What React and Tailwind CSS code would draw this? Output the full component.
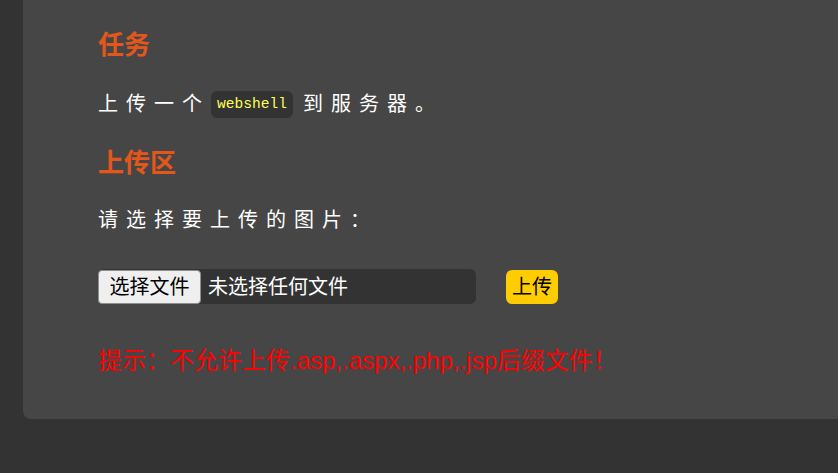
import React from "react";

const App = () => {
  return (
    <main className="min-h-screen w-full bg-[#333333] overflow-hidden font-[family-name:'Liberation_Sans','Noto_Sans_CJK_SC',sans-serif]">
      <div className="ml-[23px] mr-[-20px] bg-[#464646] rounded-bl-lg pl-[75px] pt-[27px] pb-[42px]">
        {/* Task */}
        <h2 className="text-[26px] leading-[36px] font-bold text-[#e4571b]">任务</h2>
        <p className="mt-[27px] text-[20px] leading-[28px] tracking-[8px] text-white flex items-center">
          上传一个
          <code className="ml-[1px] mr-[10px] px-[6px] h-[27px] flex items-center rounded-md bg-[#333333] text-[#ffff55] text-[14.6px] tracking-normal font-normal font-[family-name:'Liberation_Mono',monospace]">
            webshell
          </code>
          到服务器。
        </p>

        {/* Upload */}
        <h2 className="mt-[27px] text-[26px] leading-[36px] font-bold text-[#e4571b]">上传区</h2>
        <p className="mt-[25px] text-[20px] leading-[28px] tracking-[8px] text-white">请选择要上传的图片：</p>

        <form className="mt-[35px] flex items-center h-[35px]">
          <div className="w-[378px] h-[35px] flex items-center bg-[#333333] rounded-md">
            <button
              type="button"
              className="h-[34px] w-[103px] bg-[#efefef] border border-[#8f8f8f] rounded text-[20px] text-black"
            >
              选择文件
            </button>
            <span className="ml-[7px] text-[20px] text-white">未选择任何文件</span>
          </div>
          <button
            type="submit"
            className="ml-[30px] h-[34px] w-[52px] bg-[#ffcc00] rounded-md text-[20px] text-black"
          >
            上传
          </button>
        </form>

        <p className="mt-[41px] text-[24px] leading-[32px] text-[#ff0000]">
          提示：不允许上传.asp,.aspx,.php,.jsp后缀文件！
        </p>
      </div>
    </main>
  );
};

export default App;
